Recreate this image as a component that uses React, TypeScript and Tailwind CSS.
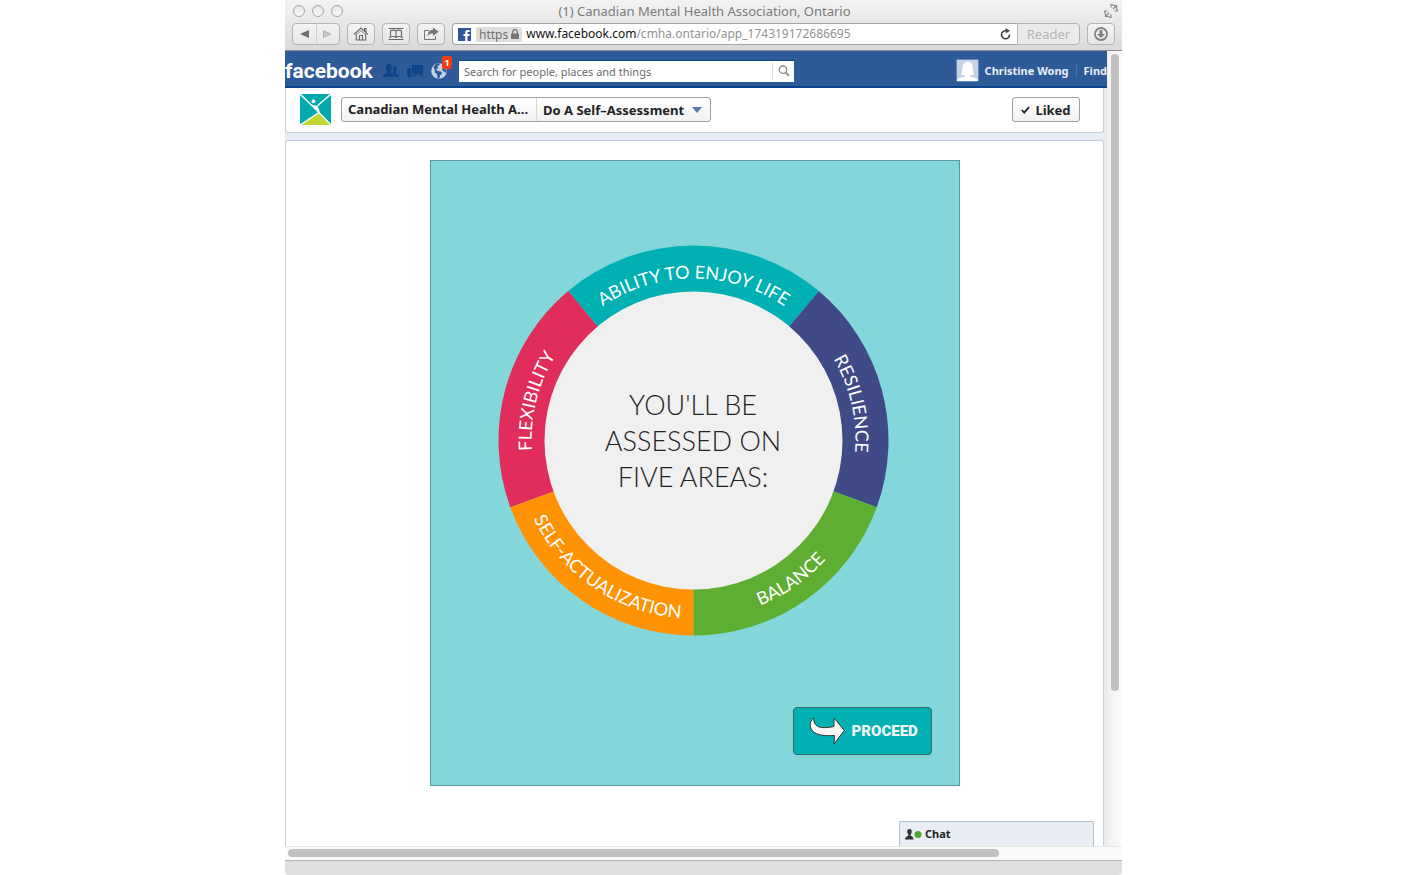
import React from "react";

type Segment = {
  id: string;
  label: string;
  from: number;
  to: number;
  mid: number;
  color: string;
  inward?: boolean;
};

const segments: Segment[] = [
  { id: "enjoy", label: "ABILITY TO ENJOY LIFE", from: 320, to: 400, mid: 0, color: "#00b0b2" },
  { id: "resilience", label: "RESILIENCE", from: 40, to: 110, mid: 77, color: "#3f4a87" },
  { id: "balance", label: "BALANCE", from: 110, to: 180, mid: 145, color: "#5eae31", inward: true },
  { id: "self", label: "SELF-ACTUALIZATION", from: 180, to: 250, mid: 214, color: "#ff9303", inward: true },
  { id: "flex", label: "FLEXIBILITY", from: 250, to: 320, mid: 284, color: "#e12d5b" },
];

const C = 195.5;

function point(r: number, deg: number) {
  const a = (deg * Math.PI) / 180;
  return `${(C + r * Math.sin(a)).toFixed(2)} ${(C - r * Math.cos(a)).toFixed(2)}`;
}

function ringPath(from: number, to: number) {
  return `M${point(195, from)} A195 195 0 0 1 ${point(195, to)} L${point(148, to)} A148 148 0 0 0 ${point(148, from)} Z`;
}

function labelPath(s: Segment) {
  return s.inward
    ? `M${point(178, s.mid + 60)} A178 178 0 0 0 ${point(178, s.mid - 60)}`
    : `M${point(162, s.mid - 60)} A162 162 0 0 1 ${point(162, s.mid + 60)}`;
}

function Wheel() {
  return (
    <svg width="391" height="391" viewBox="0 0 391 391" className="col-start-1 row-start-1">
      {segments.map((s) => (
        <path key={s.id} d={ringPath(s.from, s.to)} fill={s.color} />
      ))}
      <circle cx={C} cy={C} r="149" fill="#f0f0f0" />
      {segments.map((s) => (
        <React.Fragment key={s.id}>
          <path id={`arc-${s.id}`} d={labelPath(s)} fill="none" />
          <text className="font-['Lato',sans-serif] text-[18px] font-normal" fill="#fff" textAnchor="middle">
            <textPath href={`#arc-${s.id}`} startOffset="50%">
              {s.label}
            </textPath>
          </text>
        </React.Fragment>
      ))}
    </svg>
  );
}

const toolButton =
  "flex h-[22px] items-center justify-center rounded-[4px] border border-[#b4b4b4] bg-gradient-to-b from-[#f4f4f4] to-[#e6e6e6]";

function BrowserChrome() {
  return (
    <header className="border-b border-[#8b8b8b] bg-gradient-to-b from-[#f4f4f4] to-[#d9d9d9]">
      <div className="flex h-[22px] items-center pr-[4px] pl-[8px]">
        <div className="flex w-[78px] gap-[7px]">
          {["Close", "Minimize", "Zoom"].map((name) => (
            <button
              key={name}
              aria-label={name}
              className="size-[12px] rounded-full border border-[#a5a5a5] bg-gradient-to-b from-[#e6e6e6] to-[#f8f8f8]"
            />
          ))}
        </div>
        <h1 className="min-w-0 flex-1 truncate text-center text-[13px] leading-[22px] text-[#7b7b7b]">
          (1) Canadian Mental Health Association, Ontario
        </h1>
        <button aria-label="Enter full screen" className="flex w-[80px] justify-end">
          <svg width="14" height="14" viewBox="0 0 14 14" fill="none" stroke="#8b8b8b">
            <path d="M8.500 1.500h4v4M12.500 1.500 9 5M7 3.500V.5h2M13.500 5v2h-3M1.500 8.500v4h4M1.500 12.500 5 9M3.500 7H.5v2M5 13.500h2v-3" strokeWidth="1.200" />
          </svg>
        </button>
      </div>

      <div className="flex h-[28px] items-start gap-[7px] px-[7px] pt-px">
        <div className={`${toolButton} w-[48px]`}>
          <button aria-label="Back" className="flex h-full flex-1 items-center justify-center border-r border-[#cfcfcf]">
            <svg width="9" height="8" viewBox="0 0 9 8"><path d="M9 0v8L0 4z" fill="#6c6c6c" /></svg>
          </button>
          <button aria-label="Forward" className="flex h-full flex-1 items-center justify-center">
            <svg width="9" height="8" viewBox="0 0 9 8"><path d="M.5.7v6.600L8 4z" fill="#c9c9c9" stroke="#aaa" strokeWidth=".8" /></svg>
          </button>
        </div>
        <button aria-label="Home" className={`${toolButton} w-[28px]`}>
          <svg width="16" height="14" viewBox="0 0 16 14" fill="none" stroke="#686868" strokeWidth="1.100">
            <path d="M1 7.500 8 1l7 6.500M3.300 6.800V13h9.400V6.800M11.500 3.800V1.500h1.500v3.500M6.500 13V8.500h3V13" />
            <path d="M4.300 7 8 3.700 11.700 7" strokeWidth=".8" />
          </svg>
        </button>
        <button aria-label="Bookmarks" className={`${toolButton} w-[28px]`}>
          <svg width="16" height="14" viewBox="0 0 16 14" fill="none" stroke="#686868" strokeWidth="1.100">
            <path d="M.5 1.500h15M.5 12.500h15M8 4v6.500M2.500 10V3.800C4.500 3 6.800 3 8 4.200 9.200 3 11.500 3 13.500 3.800V10C11.500 9.400 9 9.600 8 10.500 7 9.600 4.500 9.400 2.500 10zM1 10.300h1.500M13.500 10.300H15" />
          </svg>
        </button>
        <button aria-label="Share" className={`${toolButton} w-[28px]`}>
          <svg width="16" height="14" viewBox="0 0 16 14" fill="none" stroke="#777">
            <path d="M6 3.500H1.500v9h11V9" />
            <path d="M10 .5v2.300C6.500 2.900 4.700 5.500 4.500 9.500 5.700 7 7.300 6.500 10 6.500V9L15.800 4.700z" fill="#777" stroke="none" />
          </svg>
        </button>

        <div className="flex h-[22px] min-w-0 flex-1 items-stretch">
          <div className="flex min-w-0 flex-1 items-center rounded-l-[4px] border border-r-0 border-[#a2a2a2] bg-white pr-[6px] pl-[5px]">
            <svg width="13" height="13" viewBox="0 0 13 13" className="shrink-0">
              <path d="M0 0h13v13H0z" fill="#2f5796" />
              <path d="M7.200 13V8H5.500V6h1.700V4.500C7.200 2.700 8.200 2 10 2h1.700v2h-1.200c-.9 0-1 .3-1 1v1h2.200l-.3 2H9.500v5z" fill="#fff" />
            </svg>
            <span className="ml-[5px] flex h-[15px] shrink-0 items-center gap-[3px] rounded-[2px] bg-[#dedede] px-[3px] text-[12px] leading-[15px] text-[#6f6f6f]">
              https
              <svg width="8" height="10" viewBox="0 0 8 10">
                <path d="M0 4.500h8V10H0z" fill="#767676" />
                <path d="M1.700 5V3a2.300 2.300 0 0 1 4.600 0v2" fill="none" stroke="#767676" strokeWidth="1.200" />
              </svg>
            </span>
            <div
              role="textbox"
              aria-label="Address"
              contentEditable
              suppressContentEditableWarning
              className="ml-[4px] min-w-0 flex-1 truncate text-[12px] leading-[18px] text-[#929292]"
            >
              <span className="text-[#111]">www.facebook.com</span>/cmha.ontario/app_174319172686695
            </div>
            <button aria-label="Reload">
              <svg width="11" height="12" viewBox="0 0 11 12" fill="none" stroke="#444" strokeWidth="1.600">
                <path d="M9.500 6.500A4 4 0 1 1 6 2.800" />
                <path d="M5.500 0 10 2.800 5.800 5.500z" fill="#444" stroke="none" />
              </svg>
            </button>
          </div>
          <button className="w-[63px] rounded-r-[4px] border border-[#b4b4b4] bg-[#ebebeb] text-[13px] leading-[18px] text-[#b4b4b4]">
            Reader
          </button>
        </div>
        <button aria-label="Downloads" className={`${toolButton} w-[28px]`}>
          <svg width="14" height="14" viewBox="0 0 14 14">
            <circle cx="7" cy="7" r="6" fill="#f0f0f0" stroke="#808080" strokeWidth="1.800" />
            <path d="M5.500 3h3v4H11l-4 4-4-4h2.500z" fill="#808080" />
          </svg>
        </button>
      </div>
    </header>
  );
}

function FacebookBar() {
  return (
    <nav className="flex h-[37px] items-center border-b-2 border-[#0b428c] bg-[#2f5a98] pt-[4px] text-white">
      <a href="#home" className="w-[90px] shrink-0 font-['Roboto',sans-serif] text-[21px] leading-[26px] font-bold">
        facebook
      </a>
      <div className="ml-[8px] flex shrink-0 items-center gap-[8px]">
        <button aria-label="Friend requests">
          <svg width="16" height="16" viewBox="0 0 16 16" fill="#0f438a">
            <path d="M5.800 1C8 1 9 2.600 8.800 4.800 8.700 6.500 8 7.600 7.500 8.200v1.600c1 1 3.500 1.200 3.800 4.200H0c.2-3 3-3.200 4-4.200V8.200C3.400 7.500 2.800 6.400 2.800 4.800 2.700 2.500 3.800 1 5.800 1z" />
            <path d="M11 3c2 0 2.900 1.400 2.700 3.200-.1 1.300-.6 2.300-1.200 2.900v1.200c1 .8 3.200 1.200 3.500 3.700h-3.800c-.4-2.200-1.700-3.200-3-3.900.8-1.500 1.300-3.500.8-6.900z" />
          </svg>
        </button>
        <button aria-label="Messages">
          <svg width="16" height="16" viewBox="0 0 16 16" fill="#0f438a">
            <path d="M5 2h11v9h-1v3l-3-3H5z" />
            <path d="M0 5h4v7h6v1H4l-3 2v-2H0z" />
          </svg>
        </button>
        <button aria-label="Notifications, 1 new" className="relative">
          <svg width="16" height="16" viewBox="0 0 16 16">
            <circle cx="8" cy="8" r="7.800" fill="#c3d2e8" />
            <path d="M5.500.8 9 .5 8.500 2 6.500 3 7 5 5 6.500 7 8l3 .5 1 2-2 2-.5 3-2-.5-.5-3.500L4 9.500 3.500 6 2.500 4z" fill="#2f5a98" />
            <path d="m11 3 2.500 1.500L15.500 8l-.5 2-2-1.500L11 7l1-2z" fill="#2f5a98" />
          </svg>
          <span className="absolute -top-[7px] left-[11px] h-[13px] w-[10px] rounded-[2px] bg-[#f03d12] text-center text-[9px] leading-[13px] font-bold text-white">
            1
          </span>
        </button>
      </div>
      <form className="ml-[12px] flex h-[22px] w-[335px] min-w-0 items-center border-t border-[#0b428c] bg-white" onSubmit={(e) => e.preventDefault()}>
        <input
          type="search"
          aria-label="Search"
          placeholder="Search for people, places and things"
          className="h-full min-w-0 flex-1 px-[5px] text-[11px] leading-[16px] text-[#333] outline-none placeholder:text-[#6c6c6c] placeholder:opacity-100"
        />
        <button aria-label="Search" className="flex h-[16px] w-[22px] items-center justify-center border-l border-[#dcdcdc]">
          <svg width="12" height="12" viewBox="0 0 12 12" fill="none" stroke="#929292">
            <circle cx="5" cy="4.700" r="3.700" strokeWidth="1.400" />
            <path d="m7.700 7.500 3.300 3.300" strokeWidth="1.900" />
          </svg>
        </button>
      </form>
      <div className="ml-auto flex shrink-0 items-center text-[11px] leading-[16px] font-bold text-[#e9eef6]">
        <a href="#profile" className="flex items-center gap-[6px]">
          <svg width="23" height="23" viewBox="0 0 23 23">
            <path d="M0 0h23v23H0z" fill="#c5d2e5" stroke="#0b428c" />
            <path d="M1 22c.5-3.500 5-3.500 8-4.500v-1.500c-1.500.3-3 .2-4-.3C6.800 13.500 5.500 9 7.300 5.300 9.200 1.500 14.500 1.600 16 5.300c1.600 3.700.3 8 2.200 10.400-1 .5-2.700.6-4.200.3v1.500c3 1 7.500 1 8 4.500z" fill="#fff" />
          </svg>
          Christine Wong
        </a>
        <span className="mx-[7px] h-[14px] w-px bg-[#4a70a8]" />
        <a href="#find">Find</a>
      </div>
    </nav>
  );
}

function PageHeader() {
  return (
    <div className="flex items-center rounded-b-[3px] border border-t-0 border-[#c3cfe0] bg-white px-[14px] pr-[23px] pb-[7px] pt-[6px]">
      <svg width="31" height="31" viewBox="0 0 31 31" className="shrink-0">
        <path d="M0 0h31v31H0z" fill="#00a9ac" />
        <path d="M0 31 19 18.500 31 31z" fill="#c2d72f" />
        <path d="M0 0 19 18.500 31 31M31 0 16 13M0 31 19 18.500" fill="none" stroke="#fff" strokeWidth="1.400" />
        <path d="M11 10.500 17 12l2 3 .8 4.500L16 16z" fill="#fff" />
        <circle cx="13.500" cy="7.300" r="1.900" fill="#fff" />
      </svg>
      <div className="ml-[10px] flex h-[25px] min-w-0 rounded-[3px] border border-[#a0a0a0] bg-gradient-to-b from-white to-[#f2f2f2] text-[13px] leading-[22px] font-bold text-[#222]">
        <a href="#page" className="truncate border-r border-[#d5d5d5] pr-[8px] pl-[6px]">
          Canadian Mental Health A...
        </a>
        <button aria-haspopup="menu" className="flex items-center gap-[8px] pr-[8px] pl-[6px] leading-[22px] whitespace-nowrap">
          Do A Self–Assessment
          <svg width="10" height="6" viewBox="0 0 10 6"><path d="M0 0h10L5 6z" fill="#587bb5" /></svg>
        </button>
      </div>
      <button className="ml-auto flex h-[25px] w-[68px] items-center justify-center gap-[5px] rounded-[3px] border border-[#a0a0a0] bg-gradient-to-b from-white to-[#f2f2f2] text-[13px] leading-[22px] font-bold text-[#222]">
        <svg width="9" height="8" viewBox="0 0 9 8" fill="none" stroke="#222" strokeWidth="1.800"><path d="m.8 4 2.500 2.600L8 1" /></svg>
        Liked
      </button>
    </div>
  );
}

function Assessment() {
  return (
    <section className="mx-auto mt-[19px] flex w-[530px] max-w-full flex-col border border-[#5a9a9e] bg-[#83d7da] pt-[84px] pr-[27px] pb-[30px]">
      <div className="ml-[24px] grid place-items-center">
        <Wheel />
        <h2 className="col-start-1 row-start-1 text-center font-['Lato',sans-serif] text-[27px] leading-[36px] font-light text-[#222]">
          YOU'LL BE
          <br />
          ASSESSED ON
          <br />
          FIVE AREAS:
        </h2>
      </div>
      <button className="mt-[71px] flex h-[48px] w-[139px] items-center gap-[7px] self-end rounded-[4px] border border-[#33696b] bg-[#00b0b2] pl-[15px] font-['Roboto',sans-serif] text-[15px] leading-[20px] font-black text-[#f4f4f4]">
        <svg width="36" height="28" viewBox="0 0 36 28" className="shrink-0">
          <path d="M4.500.8C0 5 0 12 5.500 15.500 10 18.500 17 19 25.500 18.500L25 27 35.300 13.500 25 1v8.500C17 11 9.500 11.500 6.500 7.500 5 5.500 4.500 3.500 4.500.8z" fill="#f6f6f6" stroke="#333" strokeLinejoin="round" />
        </svg>
        PROCEED
      </button>
    </section>
  );
}

export default function App() {
  return (
    <div className="min-h-screen bg-white">
      <div className="mx-auto flex min-h-screen w-full max-w-[837px] flex-col overflow-hidden rounded-b-[4px] font-['Noto_Sans','Open_Sans',sans-serif]">
        <BrowserChrome />
        <div className="flex flex-1">
          <div className="flex min-w-0 flex-1 flex-col bg-[#e7ecf3]">
            <FacebookBar />
            <main className="mr-[3px] flex flex-1 flex-col gap-[7px]">
              <PageHeader />
              <div className="flex flex-1 flex-col rounded-t-[3px] border border-b-0 border-[#c3cfe0] bg-white">
                <Assessment />
                <button className="mt-auto mr-[9px] flex h-[25px] w-[195px] items-center self-end rounded-t-[2px] border border-b-0 border-[#b3bcd0] bg-[#e9eef5] pl-[5px] text-[11px] leading-[16px] font-bold text-[#222]">
                  <svg width="17" height="11" viewBox="0 0 17 11" className="mr-[3px]">
                    <path d="M4.500 0C6.300 0 7 1.300 6.700 3c-.2 1.200-.6 1.800-1 2.300v1.500C7 7.500 8.500 8 8.500 10.500H0C0 8 2 7.500 3.200 6.800V5.300C2.700 4.800 2.300 4 2.200 3 2 1.200 2.800 0 4.500 0z" fill="#333" />
                    <circle cx="13" cy="5.500" r="3.500" fill="#4fa92b" />
                  </svg>
                  Chat
                </button>
              </div>
            </main>
          </div>
          <div className="w-[15px] bg-gradient-to-r from-[#f0f0f0] to-[#fcfcfc] px-[4px] pt-[3px]">
            <div className="h-[637px] w-[8px] rounded-full bg-[#c1c1c1]" />
          </div>
        </div>
        <div className="border-t border-[#e8e8e8] bg-[#fafafa] px-[3px] pt-[2px] pb-[3px]">
          <div className="h-[8px] w-[711px] max-w-full rounded-full bg-[#c1c1c1]" />
        </div>
        <footer className="h-[15px] border-t border-[#b5b5b5] bg-[#dfdfdf]" />
      </div>
    </div>
  );
}
